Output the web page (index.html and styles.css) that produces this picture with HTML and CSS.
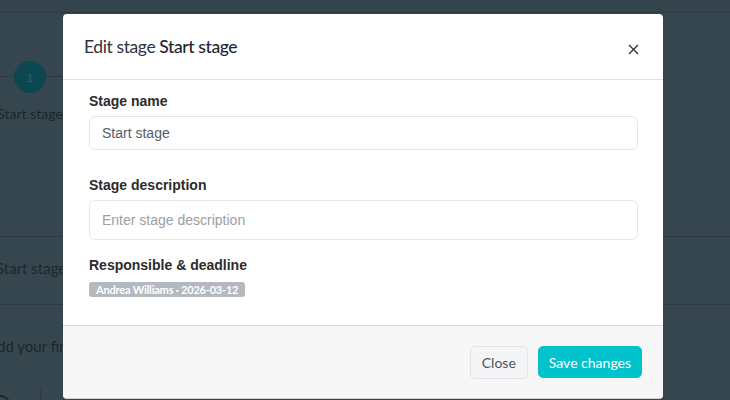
FILE: index.html
```html
<!DOCTYPE html>
<html>
<head>
<meta charset="utf-8">
<link rel="stylesheet" href="styles.css">
</head>
<body>
<div class="page">
  <div class="topbar"></div>
  <div class="stepper">
    <div class="step">
      <div class="step-line"></div>
      <div class="step-circle">1</div>
      <div class="step-label">Start stage</div>
    </div>
  </div>
  <div class="row row-stage">Start stage</div>
  <div class="row row-hint">Add your first stage</div>
  <div class="row row-bottom"><span class="ring"></span><span class="vline"></span></div>
</div>

<div class="modal">
  <div class="modal-header">
    <h5 class="modal-title">Edit stage <span class="strong">Start stage</span></h5>
    <button class="close-btn" aria-label="Close">
      <svg width="11" height="11" viewBox="0 0 11 11"><path d="M1 1L10 10M10 1L1 10" stroke="#2c3440" stroke-width="1.4" fill="none"/></svg>
    </button>
  </div>
  <div class="modal-body">
    <label class="field-label">Stage name</label>
    <div class="input">Start stage</div>
    <label class="field-label">Stage description</label>
    <div class="input textarea placeholder">Enter stage description</div>
    <label class="field-label">Responsible &amp; deadline</label>
    <span class="badge">Andrea Williams · 2026-03-12</span>
  </div>
  <div class="modal-footer">
    <button class="btn btn-light">Close</button>
    <button class="btn btn-primary">Save changes</button>
  </div>
</div>
</body>
</html>
```
FILE: styles.css
```css
* { box-sizing: border-box; }
html, body { margin: 0; padding: 0; }
body {
  width: 730px;
  height: 400px;
  overflow: hidden;
  background: #35464f;
  font-family: "Lato", "Open Sans", sans-serif;
  position: relative;
}
.page { color: #1c272d; }
.topbar { height: 13px; border-bottom: 1px solid #2c3b43; background: #33444d; }
.stepper { height: 224px; border-bottom: 1px solid #2c3b43; padding-top: 48px; }
.step { width: 60px; position: relative; display: flex; flex-direction: column; align-items: center; }
.step-line { position: absolute; top: 15px; left: 0; width: 200px; height: 1px; background: #2c3b43; }
.step-circle {
  position: relative;
  width: 32px; height: 32px; border-radius: 50%;
  background: #0b4651; color: #2a6470;
  font-size: 12px; display: flex; align-items: center; justify-content: center;
}
.step-label { margin-top: 12px; font-size: 14px; white-space: nowrap; }
.row { border-bottom: 1px solid #2c3b43; font-size: 15px; white-space: nowrap; }
.row-stage { height: 68px; padding: 22px 0 0 0; margin-left: -4px; }
.row-hint { height: 80px; padding: 32px 0 0 0; margin-left: -13px; border-bottom: none; }
.row-bottom { position: relative; height: 20px; border: none; }
.ring { position: absolute; left: -8px; top: 10px; width: 18px; height: 18px; border: 2px solid #1c272d; border-radius: 50%; }
.vline { position: absolute; left: 40px; top: 4px; width: 1px; height: 20px; background: #2c3b43; }

.modal {
  position: absolute;
  left: 63px; top: 14px;
  width: 600px; height: 385px;
  background: #fff;
  border-radius: 4px;
  display: flex; flex-direction: column;
  overflow: hidden;
  border-bottom: 1px solid #cfd3d7;
}
.modal-header {
  height: 66px;
  border-bottom: 1px solid #dde1e5;
  display: flex; align-items: center; justify-content: space-between;
  padding: 0 20px 0 21px;
}
.modal-title { margin: 0; font-size: 17.5px; font-weight: 400; color: #2c3440; letter-spacing: -0.4px; }
.modal-title .strong { font-weight: 500; color: #1f2630; }
.close-btn { border: 0; background: none; padding: 0; width: 20px; height: 20px; display: flex; align-items: center; justify-content: center; margin-top: 6px; }
.modal-body { padding: 13px 25px 0 26px; height: 245px; font-family: "Liberation Sans", Arial, sans-serif; }
.field-label { display: block; font-weight: 700; font-size: 14px; color: #2b2b2b; margin-bottom: 7px; }
.input {
  height: 34px; border: 1px solid #e3e6ea; border-radius: 6px;
  padding: 0 12px; display: flex; align-items: center;
  font-size: 14px; color: #555c63; margin-bottom: 27px;
}
.input.textarea { height: 40px; margin-bottom: 17px; }
.input.placeholder { color: #9aa0a6; }
.badge {
  display: inline-block;
  background: #b3b9bf; color: #fff;
  font-family: "Lato", sans-serif; font-weight: 700;
  font-size: 11px; line-height: 15px; padding: 0 7px;
  border-radius: 3px; letter-spacing: -0.2px;
}
.modal-footer {
  flex: 1;
  background: #f7f7f8;
  border-top: 1px solid #d6d9dc;
  display: flex; justify-content: flex-end; align-items: flex-start;
  padding: 20px 21px 0 0; gap: 10px;
}
.btn { font-family: "Lato", sans-serif; font-size: 14px; border-radius: 5px; height: 33px; padding: 0 11px; cursor: pointer; }
.btn-light { background: #f4f5f7; border: 1px solid #e1e4e8; color: #4a5560; }
.btn-primary { background: #00c3cd; border: 1px solid #00c3cd; color: #fff; height: 32px; padding: 0 10px; }
```
